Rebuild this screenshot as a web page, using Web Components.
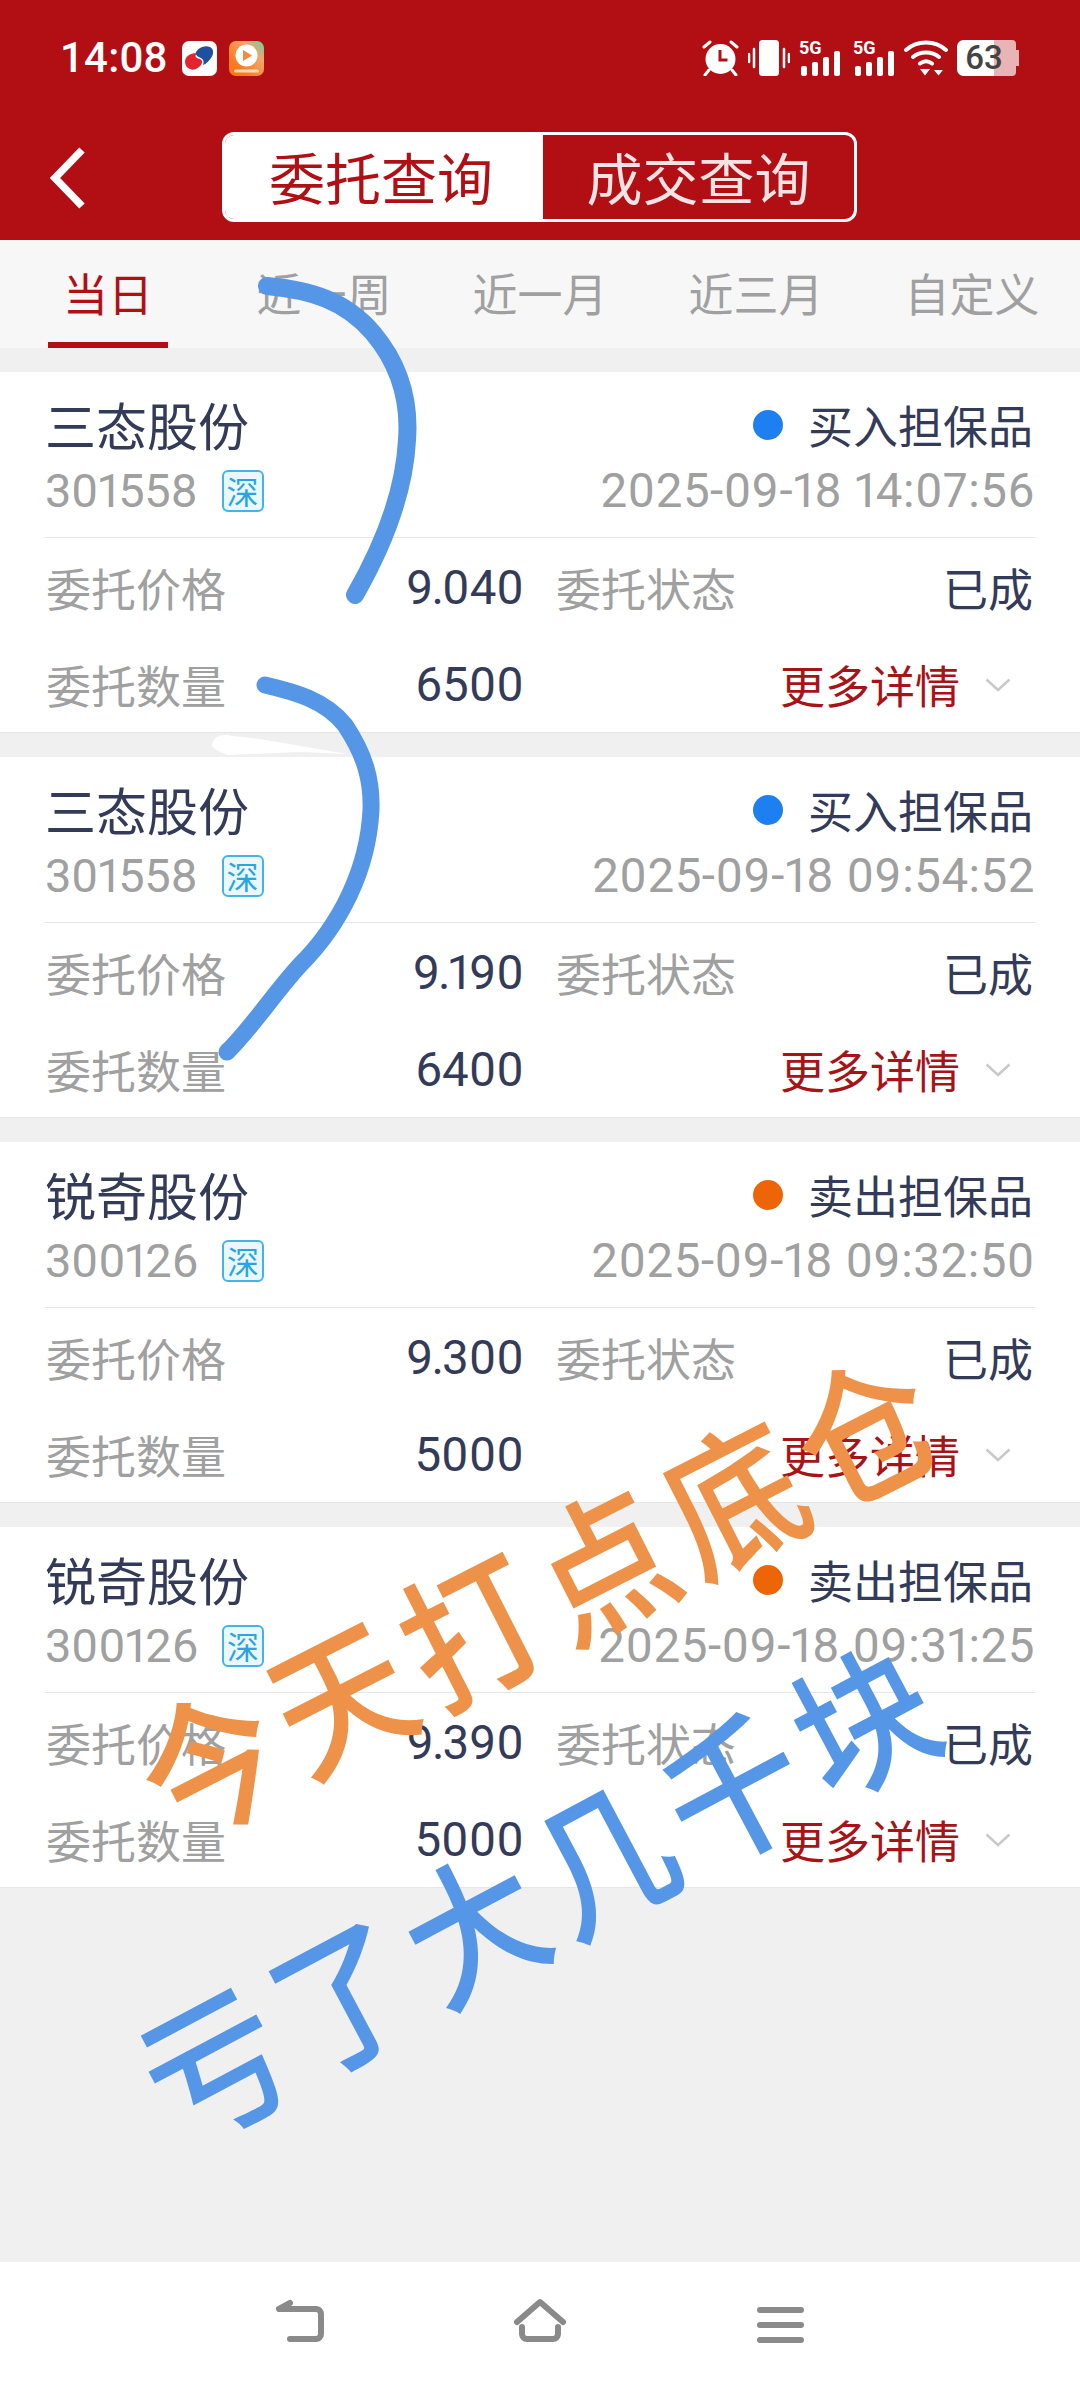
<!DOCTYPE html>
<html lang="zh">
<head>
<meta charset="utf-8">
<title>委托查询</title>
<style>
  html, body { margin: 0; padding: 0; }
  body {
    width: 1080px;
    height: 2388px;
    overflow: hidden;
    position: relative;
    background: #f0f0f0;
    font-family: Roboto, "Noto Sans CJK SC", sans-serif;
  }
  #page { display: flex; flex-direction: column; height: 2388px; }
  order-list { flex: 1; }
</style>
</head>
<body>
<div id="page">
  <status-bar></status-bar>
  <app-header></app-header>
  <period-tabs></period-tabs>
  <order-list>
    <order-card name="三态股份" code="301558" side="买入担保品" kind="buy" time="2025-09-18 14:07:56" price="9.040" qty="6500"></order-card>
    <order-card name="三态股份" code="301558" side="买入担保品" kind="buy" time="2025-09-18 09:54:52" price="9.190" qty="6400"></order-card>
    <order-card name="锐奇股份" code="300126" side="卖出担保品" kind="sell" time="2025-09-18 09:32:50" price="9.300" qty="5000"></order-card>
    <order-card name="锐奇股份" code="300126" side="卖出担保品" kind="sell" time="2025-09-18 09:31:25" price="9.390" qty="5000"></order-card>
  </order-list>
  <nav-bar></nav-bar>
</div>
<scribble-layer></scribble-layer>

<script>
const CJK = '"Noto Sans CJK SC", sans-serif';
const NUM = 'Roboto, "Noto Sans CJK SC", sans-serif';

class StatusBar extends HTMLElement {
  constructor() {
    super();
    this.attachShadow({ mode: 'open' });
    this.shadowRoot.innerHTML = `
      <style>
        :host { display: flex; align-items: center; height: 116px; padding: 0 61px 0 60px; box-sizing: border-box; background: #b20f15; color: #fff; }
        .time { font: 500 42px/1 ${NUM}; width: 122px; letter-spacing: 0.2px; }
        .apps { display: flex; gap: 12px; }
        .right { margin-left: auto; display: flex; align-items: center; gap: 9px; }
        svg { display: block; }
        .bat { position: relative; width: 62px; height: 36px; }
        .bat span { position: absolute; inset: 0 0 0 0; padding-right: 8px; text-align: center; font: 500 33px/36px ${NUM}; color: #444; }
      </style>
      <span class="time">14:08</span>
      <div class="apps">
        <svg width="35" height="35" viewBox="0 0 35 35">
          <rect width="35" height="35" rx="7" fill="#fff"/>
          <path d="M3 21c0-6 6-9 12-9-2 2-2 4 0 5 3 1 6 2 5 5-2 5-8 8-12 6-3-1-5-4-5-7z" fill="#e3232e"/>
          <path d="M14 11c3-5 9-7 14-5 4 2 4 7 1 11-2 3-5 6-8 7 1-3 1-5-2-7-3-1-6-3-5-6z" fill="#1f4fa0"/>
        </svg>
        <svg width="35" height="35" viewBox="0 0 35 35">
          <defs>
            <linearGradient id="g" x1="0" y1="1" x2="1" y2="0">
              <stop offset="0.25" stop-color="#f97a1c"/><stop offset="0.7" stop-color="#f2a66a"/><stop offset="1" stop-color="#5fd6a8"/>
            </linearGradient>
          </defs>
          <rect width="35" height="35" rx="7" fill="url(#g)"/>
          <circle cx="17.500" cy="14.500" r="11" fill="#fff"/>
          <path d="M14 9v11l9-5.500z" fill="#f58a3c"/>
          <rect x="5" y="28.500" width="25" height="3" rx="1.500" fill="#ffd9b8"/>
        </svg>
      </div>
      <div class="right">
        <svg width="37" height="36" viewBox="0 0 37 36">
          <circle cx="18.500" cy="19" r="15" fill="#fff"/>
          <path d="M18 10v10h7.500" fill="none" stroke="#b20f15" stroke-width="3"/>
          <path d="M2 7l6-5M35 7l-6-5M7 30l-4 5M30 30l4 5" stroke="#fff" stroke-width="3" stroke-linecap="round"/>
        </svg>
        <svg width="42" height="36" viewBox="0 0 42 36">
          <rect x="11" y="0" width="20" height="36" rx="3.500" fill="#fff"/>
          <path d="M6 9v18M1 14v8M36 9v18M41 14v8" stroke="#fff" stroke-width="2.500" stroke-linecap="round"/>
        </svg>
        <signal-5g></signal-5g>
        <signal-5g style="margin-left:3px"></signal-5g>
        <svg width="44" height="36" viewBox="0 0 44 36">
          <path d="M2 10C13 0 31 0 42 10M9 17c7-6 19-6 26 0M16 23.500c4-3 8-3 12 0" fill="none" stroke="#fff" stroke-width="4" stroke-linecap="round"/>
          <path d="M16 29h10l-5 6.500zM30 30h9l-4.500 5.500z" fill="#fff"/>
        </svg>
        <div class="bat">
          <svg width="62" height="36" viewBox="0 0 62 36">
            <path d="M37 0H6.500A6.500 6.500 0 0 0 0 6.500v23A6.500 6.500 0 0 0 6.500 36H37z" fill="#fff"/>
            <path d="M37 0h18a4 4 0 0 1 4 4v6h3v16h-3v6a4 4 0 0 1-4 4H37z" fill="#e8b4b6"/>
          </svg>
          <span>63</span>
        </div>
      </div>
    `;
  }
}

// "5G" over the four signal bars
class Signal5g extends HTMLElement {
  constructor() {
    super();
    this.attachShadow({ mode: 'open' });
    this.shadowRoot.innerHTML = `
      <style>
        :host { display: block; position: relative; width: 42px; height: 36px; }
        span { position: absolute; left: 0; top: 0; font: 700 18px/16px ${NUM}; color: #fff; }
        svg { display: block; }
      </style>
      <span>5G</span>
      <svg width="42" height="36" viewBox="0 0 42 36">
        <rect x="2" y="26" width="6" height="10" rx="2" fill="#fff"/>
        <rect x="13" y="22" width="6" height="14" rx="2" fill="#fff"/>
        <rect x="24" y="17" width="6" height="19" rx="2" fill="#fff"/>
        <rect x="35" y="11" width="6" height="25" rx="2" fill="#fff"/>
      </svg>
    `;
  }
}

class AppHeader extends HTMLElement {
  constructor() {
    super();
    this.attachShadow({ mode: 'open' });
    this.shadowRoot.innerHTML = `
      <style>
        :host { display: flex; align-items: flex-start; height: 124px; padding: 16px 0 0 49px; box-sizing: border-box; background: #b20f15; }
        svg { display: block; margin: 14px 135px 0 0; flex: none; }
        .seg { display: flex; width: 635px; height: 90px; box-sizing: border-box; border: 3px solid #fff; border-radius: 12px; overflow: hidden; font: 400 56px/81px ${CJK}; }
        .seg div { text-align: center; }
        .on { width: 318px; background: #fff; color: #b20f15; padding-right: 6px; box-sizing: border-box; }
        .off { flex: 1; color: #f2e4e4; }
      </style>
      <svg width="38" height="64" viewBox="0 0 38 64">
        <path d="M33 4L6 32l27 28" fill="none" stroke="#fff" stroke-width="7.500"/>
      </svg>
      <div class="seg"><div class="on">委托查询</div><div class="off">成交查询</div></div>
    `;
  }
}

class PeriodTabs extends HTMLElement {
  constructor() {
    super();
    this.attachShadow({ mode: 'open' });
    this.shadowRoot.innerHTML = `
      <style>
        :host { display: flex; height: 108px; background: #f7f7f8; font: 400 45px/105px ${CJK}; color: #a0a0a0; }
        div { flex: 1; text-align: center; }
        .on { color: #b20f15; position: relative; }
        .on::after { content: ""; position: absolute; left: 48px; width: 120px; bottom: 0; height: 6px; background: #b20f15; }
      </style>
      <div class="on">当日</div><div>近一周</div><div>近一月</div><div>近三月</div><div>自定义</div>
    `;
  }
}

class OrderList extends HTMLElement {
  constructor() {
    super();
    this.attachShadow({ mode: 'open' });
    this.shadowRoot.innerHTML = `
      <style>
        :host { display: flex; flex-direction: column; gap: 24px; padding-top: 24px; background: #f0f0f0; }
      </style>
      <slot></slot>
    `;
  }
}

class OrderCard extends HTMLElement {
  constructor() {
    super();
    this.attachShadow({ mode: 'open' });
  }

  connectedCallback() {
    const a = n => this.getAttribute(n);
    const price = a('price').replace('.', '<span class="pt">.</span>');
    this.shadowRoot.innerHTML = `
      <style>
        :host { display: block; height: 361px; box-sizing: border-box; padding: 0 45px; background: #fff; border-bottom: 1px solid #e6e6e6; color: #343b58; }
        .head { height: 165px; box-sizing: border-box; padding-top: 24px; }
        .line { display: flex; justify-content: space-between; align-items: center; }
        .l1 { height: 60px; }
        .l2 { height: 50px; margin-top: 10px; }
        .name { font: 400 51px/56px ${CJK}; margin-top: -4px; }
        .side { display: flex; align-items: center; font: 400 45px/56px ${CJK}; margin-top: -3px; padding-right: 2px; }
        .dot { width: 30px; height: 30px; border-radius: 50%; margin-right: 25px; background: ${a('kind') === 'buy' ? '#1e7ff0' : '#ee6507'}; }
        .code { display: flex; align-items: center; font: 400 47px/50px ${NUM}; font-variant-numeric: proportional-nums; letter-spacing: -0.300px; color: #a0a0a0; }
        .mkt { width: 42px; height: 42px; box-sizing: border-box; margin-left: 24px; border: 2px solid #45b3e6; border-radius: 6px; background: #eaf7fd; color: #2aa5df; font: 400 32px/37px ${CJK}; text-align: center; letter-spacing: 0; }
        .time { font: 400 47.500px/50px ${NUM}; font-variant-numeric: proportional-nums; letter-spacing: 0.500px; color: #a0a0a0; }
        hr { margin: 0; border: 0; height: 1px; background: #e6e6e6; }
        .rows { display: grid; grid-template-columns: 479px 1fr; column-gap: 31px; grid-auto-rows: 97px; padding-top: 1px; }
        .cell { display: flex; justify-content: space-between; align-items: center; }
        .k { font: 400 45px/56px ${CJK}; color: #a0a0a0; padding-left: 1px; }
        .v { font: 400 47.500px/60px ${NUM}; font-variant-numeric: proportional-nums; }
        .pt { margin: 0 -2px; }
        .s { font: 400 45px/56px ${CJK}; padding-right: 2px; }
        .more { margin-left: auto; display: flex; align-items: center; font: 400 45px/56px ${CJK}; color: #a81318; }
        .more svg { margin: 0 24px 0 25px; display: block; }
      </style>
      <div class="head">
        <div class="line l1">
          <span class="name">${a('name')}</span>
          <span class="side"><span class="dot"></span>${a('side')}</span>
        </div>
        <div class="line l2">
          <span class="code">${a('code')}<span class="mkt">深</span></span>
          <span class="time">${a('time')}</span>
        </div>
      </div>
      <hr>
      <div class="rows">
        <div class="cell"><span class="k">委托价格</span><span class="v">${price}</span></div>
        <div class="cell"><span class="k">委托状态</span><span class="s">已成</span></div>
        <div class="cell"><span class="k">委托数量</span><span class="v">${a('qty')}</span></div>
        <div class="cell"><span class="more">更多详情
          <svg width="26" height="14" viewBox="0 0 26 14"><path d="M1.500 1.500L13 12 24.500 1.500" fill="none" stroke="#c9c9c9" stroke-width="2.500"/></svg>
        </span></div>
      </div>
    `;
  }
}

class NavBar extends HTMLElement {
  constructor() {
    super();
    this.attachShadow({ mode: 'open' });
    this.shadowRoot.innerHTML = `
      <style>
        :host { display: flex; justify-content: center; height: 126px; padding-top: 34px; box-sizing: border-box; background: #fff; }
        svg { display: block; width: 240px; height: 50px; }
        path { fill: none; stroke: #8a8a8a; stroke-width: 6; stroke-linecap: round; stroke-linejoin: round; }
      </style>
      <svg viewBox="0 0 240 50"><path d="M110 7L99 13H136a5 5 0 0 1 5 5v20a5 5 0 0 1-5 5H110"/></svg>
      <svg viewBox="0 0 240 50"><path d="M97 26L120 6L143 26M102 31v7a5 5 0 0 0 5 5h26a5 5 0 0 0 5-5v-7"/></svg>
      <svg viewBox="0 0 240 50"><path d="M100 14h41M100 29h41M100 44h41"/></svg>
    `;
  }
}

// marker strokes and handwriting someone put over the screenshot
class ScribbleLayer extends HTMLElement {
  constructor() {
    super();
    this.attachShadow({ mode: 'open' });
    this.shadowRoot.innerHTML = `
      <style>
        :host { display: block; position: absolute; left: 0; top: 0; width: 1080px; height: 2388px; pointer-events: none; overflow: hidden; }
        svg { position: absolute; left: 0; top: 0; }
        .hand { position: absolute; white-space: nowrap; transform-origin: 0 50%; font: 500 136px/136px ${CJK}; letter-spacing: 11px; }
        .o { left: 146px; top: 1721px; color: #ed9248; transform: rotate(-27deg) scale(1, 1.1); }
        .b { left: 151px; top: 2023px; color: #5596e6; transform: rotate(-28deg) scale(1, 1.1); }
      </style>
      <svg width="1080" height="2388" viewBox="0 0 1080 2388" fill="none" stroke-linecap="round" stroke-linejoin="round">
        <path d="M215 738Q222 733 232 736L260 739L347 754L300 752L228 755Q212 750 212 744Z" fill="#fff"/>
        <path d="M267 286C310 290 345 300 373 333C400 365 410 400 407 440C404 500 375 560 355 595" stroke="#5596e6" stroke-width="18"/>
        <path d="M265 685C295 692 325 700 345 725C365 755 372 780 371 810C368 870 340 925 300 965C275 992 250 1030 227 1052" stroke="#5596e6" stroke-width="17"/>
      </svg>
      <div class="hand o">今天打点底仓</div>
      <div class="hand b">亏了大几千块</div>
    `;
  }
}

customElements.define('status-bar', StatusBar);
customElements.define('signal-5g', Signal5g);
customElements.define('app-header', AppHeader);
customElements.define('period-tabs', PeriodTabs);
customElements.define('order-list', OrderList);
customElements.define('order-card', OrderCard);
customElements.define('nav-bar', NavBar);
customElements.define('scribble-layer', ScribbleLayer);
</script>
</body>
</html>
